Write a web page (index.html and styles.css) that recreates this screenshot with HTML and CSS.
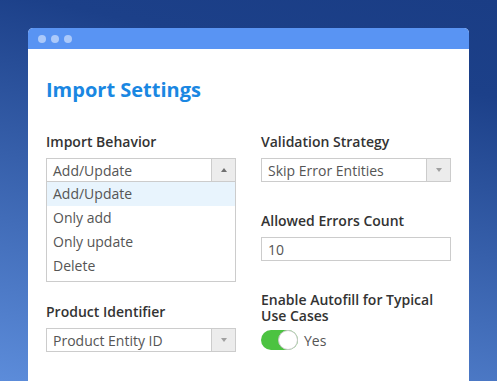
FILE: index.html
```html
<!DOCTYPE html>
<html lang="en">
  <head>
    <meta charset="UTF-8" />
    <title>Import Settings</title>
    <link rel="stylesheet" href="styles.css">
  </head>
  <body>
    <div class="window">
      <div class="title-bar">
        <span class="dot"></span>
        <span class="dot"></span>
        <span class="dot"></span>
      </div>

      <div class="content">
        <h1 class="title">Import Settings</h1>

        <div class="columns">
          <div class="column">
            <div class="field field-open">
              <div class="label">Import Behavior</div>
              <div class="select">
                <span class="select-value">Add/Update</span>
                <span class="select-btn"><span class="arrow arrow-up"></span></span>
              </div>
              <ul class="dropdown">
                <li class="active">Add/Update</li>
                <li>Only add</li>
                <li>Only update</li>
                <li>Delete</li>
              </ul>
            </div>

            <div class="field">
              <div class="label">Product Identifier</div>
              <div class="select">
                <span class="select-value">Product Entity ID</span>
                <span class="select-btn"><span class="arrow"></span></span>
              </div>
            </div>
          </div>

          <div class="column">
            <div class="field">
              <div class="label">Validation Strategy</div>
              <div class="select">
                <span class="select-value">Skip Error Entities</span>
                <span class="select-btn"><span class="arrow"></span></span>
              </div>
            </div>

            <div class="field">
              <div class="label">Allowed Errors Count</div>
              <div class="input">10</div>
            </div>

            <div class="field">
              <div class="label">Enable Autofill for Typical Use Cases</div>
              <div class="switch-row">
                <span class="switch"><span class="knob"></span></span>
                <span class="switch-text">Yes</span>
              </div>
            </div>
          </div>
        </div>
      </div>
    </div>
  </body>
</html>
```

FILE: styles.css
```css
* {
  margin: 0;
  padding: 0;
  box-sizing: border-box;
}

body {
  background: linear-gradient(192deg, #1a3d85 0%, #1c4089 20%, #5c8cda 100%);
  font-family: 'Open Sans', 'Noto Sans', sans-serif;
  height: 100vh;
  overflow: hidden;
  padding: 28px 28px 0 28px;
}

.window {
  background: #fff;
  border-radius: 5px 5px 0 0;
  height: 100%;
  overflow: hidden;
}

.title-bar {
  background: #5994f3;
  height: 21px;
  display: flex;
  align-items: center;
  gap: 5px;
  padding-left: 10px;
}

.dot {
  width: 8px;
  height: 8px;
  border-radius: 50%;
  background: #abc9fa;
}

.content {
  padding: 27px 18px 0 18px;
}

.title {
  font-size: 20px;
  line-height: 27px;
  font-weight: 700;
  color: #1a87e2;
  margin-bottom: 31px;
}

.columns {
  display: grid;
  grid-template-columns: 190px 190px;
  gap: 25px;
}

.field {
  margin-bottom: 31px;
}

/* le menu ouvert pousse le champ suivant */
.field-open {
  margin-bottom: 22px;
}

.label {
  font-size: 14px;
  line-height: 16px;
  font-weight: 600;
  color: #333;
  margin-bottom: 8px;
}

.select,
.input {
  height: 24px;
  border: 1px solid #ccc;
  display: flex;
  align-items: center;
  font-size: 14px;
  color: #555;
  background: #fff;
}

.input {
  padding-left: 6px;
}

.select-value {
  flex: 1;
  padding-left: 6px;
}

.select-btn {
  width: 24px;
  height: 100%;
  background: #ececec;
  border-left: 1px solid #ccc;
  display: flex;
  align-items: center;
  justify-content: center;
}

.arrow {
  width: 0;
  height: 0;
  border-left: 3px solid transparent;
  border-right: 3px solid transparent;
  border-top: 4px solid #a0a0a0;
}

.arrow-up {
  border-top: none;
  border-bottom: 4px solid #6f6f6f;
}

.dropdown {
  list-style: none;
  border: 1px solid #ccc;
  border-top: none;
  padding-bottom: 3px;
}

.dropdown li {
  height: 24px;
  line-height: 24px;
  padding-left: 6px;
  font-size: 14px;
  color: #555;
}

.dropdown li.active {
  background: #e8f4fd;
}

.switch-row {
  display: flex;
  align-items: center;
  gap: 6px;
  margin-top: -2px;
}

.switch {
  width: 37px;
  height: 20px;
  border-radius: 10px;
  background: #4cc341;
  position: relative;
}

.knob {
  position: absolute;
  right: 0;
  top: 0;
  width: 20px;
  height: 20px;
  border-radius: 50%;
  background: #fff;
  border: 1px solid #c8c8c8;
}

.switch-text {
  font-size: 14px;
  color: #555;
}
```
